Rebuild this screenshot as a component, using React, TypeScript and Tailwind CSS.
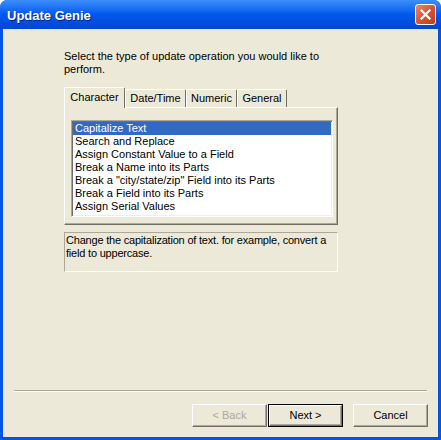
import React from 'react';

const items = [
  'Capitalize Text',
  'Search and Replace',
  'Assign Constant Value to a Field',
  'Break a Name into its Parts',
  'Break a "city/state/zip" Field into its Parts',
  'Break a Field into its Parts',
  'Assign Serial Values',
];

const tabs = [
  { label: 'Character', width: 'w-[61px]' },
  { label: 'Date/Time', width: 'w-[61px]' },
  { label: 'Numeric', width: 'w-[51px]' },
  { label: 'General', width: 'w-[50px]' },
];

const CloseButton = () => (
  <div className="w-[21px] h-[21px] rounded-[3px] border border-white bg-gradient-to-br from-[#E8866A] via-[#D9552F] to-[#C23A14] flex items-center justify-center">
    <svg width="11" height="11" viewBox="0 0 11 11">
      <path d="M1.5 1.5 L9.5 9.5 M9.5 1.5 L1.5 9.5" stroke="white" strokeWidth="2.2" strokeLinecap="square" />
    </svg>
  </div>
);

const ClassicButton: React.FC<{ label: string; isDefault?: boolean; disabled?: boolean }> = ({ label, isDefault, disabled }) => (
  <div className={`w-[75px] h-[23px] ${isDefault ? 'border border-black' : ''}`}>
    <div className="w-full h-full border border-t-white border-l-white border-r-[#716F64] border-b-[#716F64] shadow-[inset_-1px_-1px_0_#ACA899] flex items-center justify-center">
      <span className={disabled ? 'text-[#ACA899]' : 'text-black'}>{label}</span>
    </div>
  </div>
);

export default function App() {
  return (
    <div className="w-[441px] h-[440px] bg-[#0055E5] rounded-t-[7px] flex flex-col font-['Liberation_Sans',Arial,sans-serif] text-[11px] leading-[13px] text-black overflow-hidden">
      {/* title bar */}
      <div className="h-[29px] flex items-center justify-between pl-[7px] pr-[5px] bg-gradient-to-b from-[#3C8DFB] via-[#0058EE] to-[#0046D2] rounded-t-[7px]">
        <span className="text-white font-bold text-[13px] [text-shadow:1px_1px_0_#0A1E8C] pt-[1px]">Update Genie</span>
        <CloseButton />
      </div>

      {/* body */}
      <div className="flex-1 mx-[3px] mb-[3px] bg-[#ECE9D8] flex flex-col">
        <div className="pl-[61px] pt-[21px] w-[335px] flex flex-col">
          <p>Select the type of update operation you would like to perform.</p>

          {/* tabs */}
          <div className="mt-[11px] h-[20px] flex items-end">
            {tabs.map((t, i) => (
              <div
                key={t.label}
                className={`${t.width} flex items-center justify-center border-t border-l border-r border-t-white border-l-white border-r-[#716F64] rounded-t-[2px] bg-[#ECE9D8] ${
                  i === 0 ? 'h-[21px] mb-[-1px] relative z-10 pb-[2px]' : 'h-[18px]'
                }`}
              >
                {t.label}
              </div>
            ))}
          </div>

          {/* panel */}
          <div className="h-[118px] w-[274px] border border-t-white border-l-white border-r-[#716F64] border-b-[#716F64] shadow-[inset_-1px_-1px_0_#ACA899] pl-[6px] pt-[12px]">
            <div className="w-[262px] h-[97px] bg-white border border-t-[#ACA899] border-l-[#ACA899] border-r-white border-b-white shadow-[inset_1px_1px_0_#716F64,inset_-1px_-1px_0_#F1EFE2] p-[1px]">
              {items.map((it, i) => (
                <div
                  key={it}
                  className={`h-[13px] pl-[2px] whitespace-nowrap ${i === 0 ? 'bg-[#316AC5] text-white' : ''}`}
                >
                  {it}
                </div>
              ))}
            </div>
          </div>

          {/* description */}
          <div className="mt-[7px] h-[40px] w-[274px] border border-t-[#ACA899] border-l-[#ACA899] border-r-white border-b-white pl-[1px] pt-[1px] tracking-[-0.2px]">
            Change the capitalization of text. for example, convert a field to uppercase.
          </div>
        </div>

        <div className="flex-1" />

        {/* separator */}
        <div className="mx-[11px] h-[2px] border-t border-t-[#ACA899] border-b border-b-white" />

        {/* buttons */}
        <div className="mt-[12px] mb-[10px] pr-[10px] flex justify-end">
          <ClassicButton label="< Back" disabled />
          <div className="ml-[1px]">
            <ClassicButton label="Next >" isDefault />
          </div>
          <div className="ml-[10px]">
            <ClassicButton label="Cancel" />
          </div>
        </div>
      </div>
    </div>
  );
}
